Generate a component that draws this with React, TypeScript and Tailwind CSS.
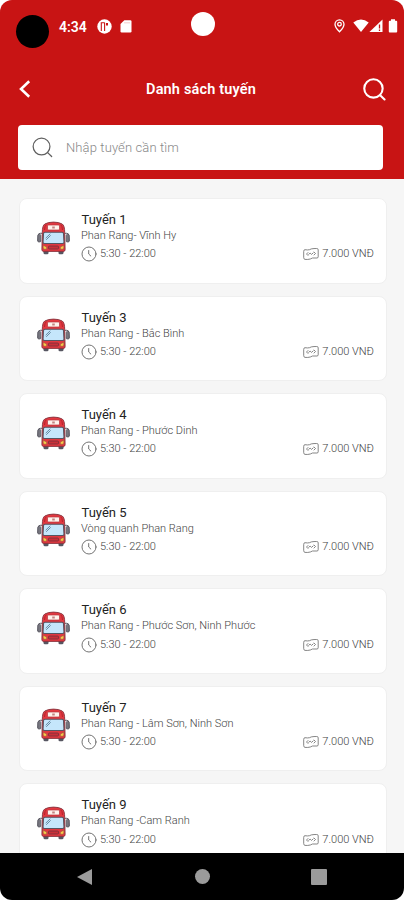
import React from "react";

const routes = [
  { name: "Tuyến 1", path: "Phan Rang- Vĩnh Hy" },
  { name: "Tuyến 3", path: "Phan Rang - Bắc Bình" },
  { name: "Tuyến 4", path: "Phan Rang - Phước Dinh" },
  { name: "Tuyến 5", path: "Vòng quanh Phan Rang" },
  { name: "Tuyến 6", path: "Phan Rang - Phước Sơn, Ninh Phước" },
  { name: "Tuyến 7", path: "Phan Rang - Lâm Sơn, Ninh Sơn" },
  { name: "Tuyến 9", path: "Phan Rang -Cam Ranh" },
];

function SearchIcon({ className, width }: { className: string; width: number }) {
  return (
    <svg className={className} viewBox="0 0 22 22" fill="none" stroke="currentColor" strokeWidth={width} strokeLinecap="round">
      <circle cx="10" cy="10" r="8.8" />
      <path d="M16.400 16.400 20.600 20.500" />
    </svg>
  );
}

function BusIcon() {
  return (
    <svg className="h-[34px] w-[33px] shrink-0" viewBox="0 0 33 34">
      <path d="M6 28h5.500v4q0 1.300-1.300 1.300H8Q6.600 33.300 6.500 32zM21.500 28H27l-.5 4q-.1 1.300-1.500 1.300h-2.200q-1.300 0-1.300-1.300z" fill="#565661" />
      <path d="M5.500 12.300H3.200q-2 0-2 2l-.5 5.500h3M27.500 12.300h2.300q2 0 2 2l.5 5.500h-3" fill="none" stroke="#5c5b65" strokeWidth="1" />
      <path d="M.8 14.500q0-1 1-1h1q1 0 1 1V20q0 1-1 1h-1q-1 0-1-1zM29.200 14.500q0-1 1-1h1q1 0 1 1V20q0 1-1 1h-1q-1 0-1-1z" fill="#777780" stroke="#51505a" strokeWidth=".7" />
      <path d="M5.300 11.500Q5.300 4.500 7.800 3q3.300-1.900 8.700-1.900T25.200 3q2.500 1.500 2.500 8.500l.4 17.200q0 1.700-1.700 1.700H6.600q-1.700 0-1.700-1.700z" fill="#e23840" stroke="#83323c" strokeWidth=".9" />
      <path d="M7.500 9q.2-4.300 1.800-5.300M25.500 9q-.2-4.300-1.800-5.300" fill="none" stroke="#b4242d" strokeWidth="1" />
      <rect x="10.500" y="4" width="12" height="5" rx="1" fill="#fff3ed" stroke="#b5343c" strokeWidth=".7" />
      <path d="M15.200 5.400h2.600v2.200h-2.600z" fill="#c38482" />
      <path d="M8 11.200h17q1.400 0 1.500 1.500l.5 8.500q0 1.300-1.500 1.300h-18Q6 22.500 6 21.200l.5-8.500q.1-1.500 1.500-1.500z" fill="#c5e6fb" stroke="#565561" strokeWidth="1.100" />
      <path d="m8.700 17.200 4.600-4.500M9.200 18.800l4.500-4.500" stroke="#50748a" strokeWidth=".8" />
      <path d="M6.200 24.300 9.700 26v2.200H7.500q-1.300 0-1.300-1.300zM26.800 24.300 23.300 26v2.200h2.200q1.300 0 1.300-1.300z" fill="#f7cb49" stroke="#8a4840" strokeWidth=".5" />
      <rect x="11.500" y="25" width="10" height="3" rx=".8" fill="#c93039" stroke="#72343c" strokeWidth=".8" />
    </svg>
  );
}

function ClockIcon() {
  return (
    <svg className="h-4 w-4 shrink-0" viewBox="0 0 16 16" fill="none" stroke="#6c6c6c" strokeWidth=".95" strokeLinecap="round">
      <circle cx="8" cy="8" r="7" />
      <path d="M7.700 4.500V8l2.100 2" />
    </svg>
  );
}

function MoneyIcon() {
  return (
    <svg className="h-3 w-4 shrink-0" viewBox="0 0 16 12" fill="none" stroke="#707070" strokeWidth=".85" strokeLinejoin="round" strokeLinecap="round">
      <path d="M.7 3q0-1.300 1.300-1.300 2.500.5 4.500 0L8.300.9Q11 .4 13.700.5q1.500 0 1.500 1.300v7q0 1.200-1.300 1.200H9.500l-2.200 1q-2.500.7-5.300.4-1.300-.2-1.300-1.400z" />
      <path d="M5 4.500 3.500 6 5 7.500M11 4l1.500 1.500L11 7M5.700 6.300l1.400-1.200 1.400 1.300 1.700-1.500" />
    </svg>
  );
}

function RouteCard({ name, path }: { name: string; path: string }) {
  return (
    <article className="flex h-[85.500px] shrink-0 rounded-[8px] border border-[#efefef] bg-white pt-[12px] pr-[12px] pl-[17px]">
      <div className="mt-[9.500px]">
        <BusIcon />
      </div>
      <div className="ml-[11px] min-w-0 flex-1">
        <h2 className="h-[17px] pl-[0.500px] text-[13px] leading-[17px] text-[#222]">{name}</h2>
        <p className="h-[16px] text-[11px] leading-[16px] font-light whitespace-nowrap text-[#444]">{path}</p>
        <div className="mt-[2.400px] flex h-4 items-center justify-between text-[11px] leading-4 font-light text-[#444]">
          <span className="flex items-center gap-[3px]">
            <ClockIcon />
            <span>5:30 - 22:00</span>
          </span>
          <span className="flex items-center gap-[3px]">
            <MoneyIcon />
            <span>7.000 VNĐ</span>
          </span>
        </div>
      </div>
    </article>
  );
}

function StatusBar() {
  return (
    <div className="flex h-[53px] items-start justify-between pr-[6px] pl-[16px]">
      <div className="flex w-[160px] items-start">
        <span className="mt-[15px] h-[33px] w-[33px] rounded-full bg-black" />
        <span className="mt-[17px] ml-[10px] w-[29px] text-[14px] leading-[20px] font-semibold whitespace-nowrap">4:34</span>
        <svg className="mt-[19px] ml-[9px] h-[15px] w-[15px]" viewBox="0 0 15 15">
          <circle cx="7.500" cy="7.500" r="7.200" fill="white" />
          <path d="M4.300 12V3.700h3.500M7.600 3.700V12" fill="none" stroke="#c81414" strokeWidth="1.100" />
          <path d="M9 4h2v2.500H9z" fill="#c81414" />
        </svg>
        <svg className="mt-[20px] ml-[8px] h-[13px] w-[12px]" viewBox="0 0 12 13">
          <path d="M4.300.3h6q1.200 0 1.200 1.200v9.800q0 1.200-1.200 1.200h-8.600Q.5 12.500.5 11.300V4z" fill="white" />
          <path d="M5 2v1.500M7 2v1.500M9 2v1.500" stroke="#e99b9b" strokeWidth=".7" />
        </svg>
      </div>
      <span className="mt-[12px] h-6 w-6 rounded-full bg-white" />
      <div className="flex w-[168px] items-start justify-end">
        <svg className="mt-[19px] h-[14px] w-[11px]" viewBox="0 0 11 14" fill="none" stroke="white" strokeWidth="1.300">
          <path d="M5.500 12.800Q1 8.500 1 5.300a4.500 4.500 0 0 1 9 0q0 3.200-4.500 7.500z" />
          <circle cx="5.500" cy="5.200" r="1.800" />
        </svg>
        <svg className="mt-[19px] ml-[8px] h-[14px] w-[16px]" viewBox="0 0 16 14">
          <path d="M.3 3.500q7.700-6 15.400 0L8 13z" fill="white" />
        </svg>
        <svg className="mt-[19px] h-[14px] w-[14px]" viewBox="0 0 14 14">
          <path d="M13.500.5V13H.4z" fill="white" />
          <path d="M10.500 5.500v4M10.500 10.500v1.500" stroke="#c81414" strokeWidth="1.300" />
        </svg>
        <svg className="mt-[19px] ml-[5px] h-[14px] w-[10px]" viewBox="0 0 10 14">
          <path d="M3 .3h4v1.400h1.200q1 0 1 1v9.800q0 1-1 1H1.800q-1 0-1-1V2.700q0-1 1-1H3z" fill="white" />
        </svg>
      </div>
    </div>
  );
}

export default function App() {
  return (
    <div className="h-[900px] w-[404px] overflow-hidden bg-white font-['Roboto','Noto_Sans',sans-serif]">
      <main className="flex h-[900px] flex-col overflow-hidden rounded-[12px] bg-[#f6f6f6]">
        <header className="h-[179px] shrink-0 bg-[#c81414] text-white">
          <StatusBar />
          <div className="flex h-[72px] items-center justify-between pr-[18px] pl-[17px]">
            <svg className="h-[18px] w-[22px]" viewBox="0 0 22 18" fill="none" stroke="white" strokeWidth="2.600">
              <path d="M12.200 1.200 4 9l8.200 7.800" />
            </svg>
            <h1 className="pt-[2px] text-[14.500px] leading-5 font-semibold tracking-[0.160px]">Danh sách tuyến</h1>
            <SearchIcon className="h-[23px] w-[23px]" width={2} />
          </div>
          <label className="mr-[21px] ml-[18px] flex h-[45px] items-center rounded-[4px] bg-white pl-[14px]">
            <SearchIcon className="h-[21px] w-[21px] shrink-0 text-[#606060]" width={1.3} />
            <input
              className="ml-[13px] min-w-0 flex-1 text-[13px] font-light tracking-[0.120px] text-[#777] outline-none placeholder:text-[#888]"
              placeholder="Nhập tuyến cần tìm"
            />
          </label>
        </header>
        <section className="flex min-h-0 flex-1 flex-col gap-[12.050px] overflow-hidden pt-[19px] pr-[17px] pl-[19px]">
          {routes.map((route) => (
            <RouteCard key={route.name} name={route.name} path={route.path} />
          ))}
        </section>
        <nav className="flex h-[47px] shrink-0 items-center justify-between bg-black pr-[77px] pl-[77px]">
          <svg className="h-4 w-[15px]" viewBox="0 0 15 16">
            <path d="M15 0v16L0 8z" fill="#9b9b9b" />
          </svg>
          <span className="ml-[1px] h-[15px] w-[15px] rounded-full bg-[#9b9b9b]" />
          <span className="h-4 w-4 rounded-[1px] bg-[#9b9b9b]" />
        </nav>
      </main>
    </div>
  );
}
